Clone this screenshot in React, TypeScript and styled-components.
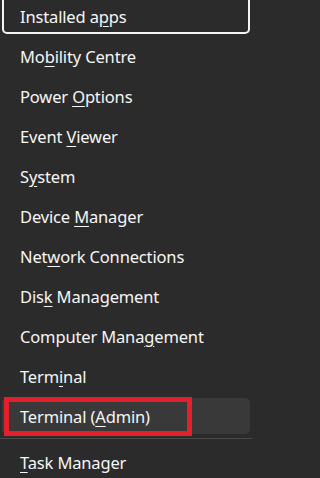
import React from 'react'
import styled, { createGlobalStyle } from 'styled-components'

const Global = createGlobalStyle`
  html, body {
    margin: 0;
    padding: 0;
    background: #2b2b2b;
    overflow: hidden;
  }
  #root {
    width: 252px;
    height: 478px;
    overflow: hidden;
  }
`

type Entry = { before: string; key: string; after: string }

const items: Entry[] = [
  { before: 'Installed a', key: 'p', after: 'ps' },
  { before: 'Mo', key: 'b', after: 'ility Centre' },
  { before: 'Power ', key: 'O', after: 'ptions' },
  { before: 'Event ', key: 'V', after: 'iewer' },
  { before: 'S', key: 'y', after: 'stem' },
  { before: 'Device ', key: 'M', after: 'anager' },
  { before: 'Net', key: 'w', after: 'ork Connections' },
  { before: 'Dis', key: 'k', after: ' Management' },
  { before: 'Computer Mana', key: 'g', after: 'ement' },
  { before: 'Term', key: 'i', after: 'nal' },
  { before: 'Terminal (', key: 'A', after: 'dmin)' },
]

const App = () => {
  return (
    <Menu>
      <Global />
      {items.map((it, i) => (
        <Item key={i} $focused={i === 0} $hover={i === 10}>
          <Label>
            {it.before}
            <Key>{it.key}</Key>
            {it.after}
          </Label>
          {i === 10 && <Marker />}
        </Item>
      ))}
      <Separator />
      <Item $focused={false} $hover={false}>
        <Label>
          <Key>T</Key>ask Manager
        </Label>
      </Item>
    </Menu>
  )
}

export default App

const Menu = styled.div`
  width: 252px;
  height: 478px;
  display: flex;
  flex-direction: column;
  gap: 4px;
  margin-top: -2px;
  font-family: 'Noto Sans', 'Open Sans', sans-serif;
`

const Item = styled.div<{ $focused: boolean; $hover: boolean }>`
  position: relative;
  flex: 0 0 ${({ $focused }) => ($focused ? '40px' : '36px')};
  margin: ${({ $focused }) => ($focused ? '-4px 2px 0' : '0 2px')};
  padding: ${({ $focused }) => ($focused ? '5px 0 0 18px' : '0 0 0 18px')};
  box-sizing: border-box;
  display: flex;
  align-items: center;
  border-radius: 5px;
  background: ${({ $hover }) => ($hover ? '#393939' : 'transparent')};
  box-shadow: ${({ $focused }) => ($focused ? 'inset 0 0 0 2px #f4f4f4' : 'none')};
`

const Label = styled.span`
  color: #f6f6f6;
  font-size: 16.5px;
  letter-spacing: -0.15px;
  white-space: nowrap;
`

const Key = styled.u`
  text-decoration-thickness: 1px;
  text-underline-offset: 3px;
`

const Marker = styled.div`
  position: absolute;
  left: 2px;
  top: -1px;
  width: 188px;
  height: 39px;
  box-sizing: border-box;
  border: 5px solid #e3212c;
`

const Separator = styled.div`
  flex: 0 0 1px;
  height: 1px;
  margin: 0 0 1px;
  background: #484848;
`
